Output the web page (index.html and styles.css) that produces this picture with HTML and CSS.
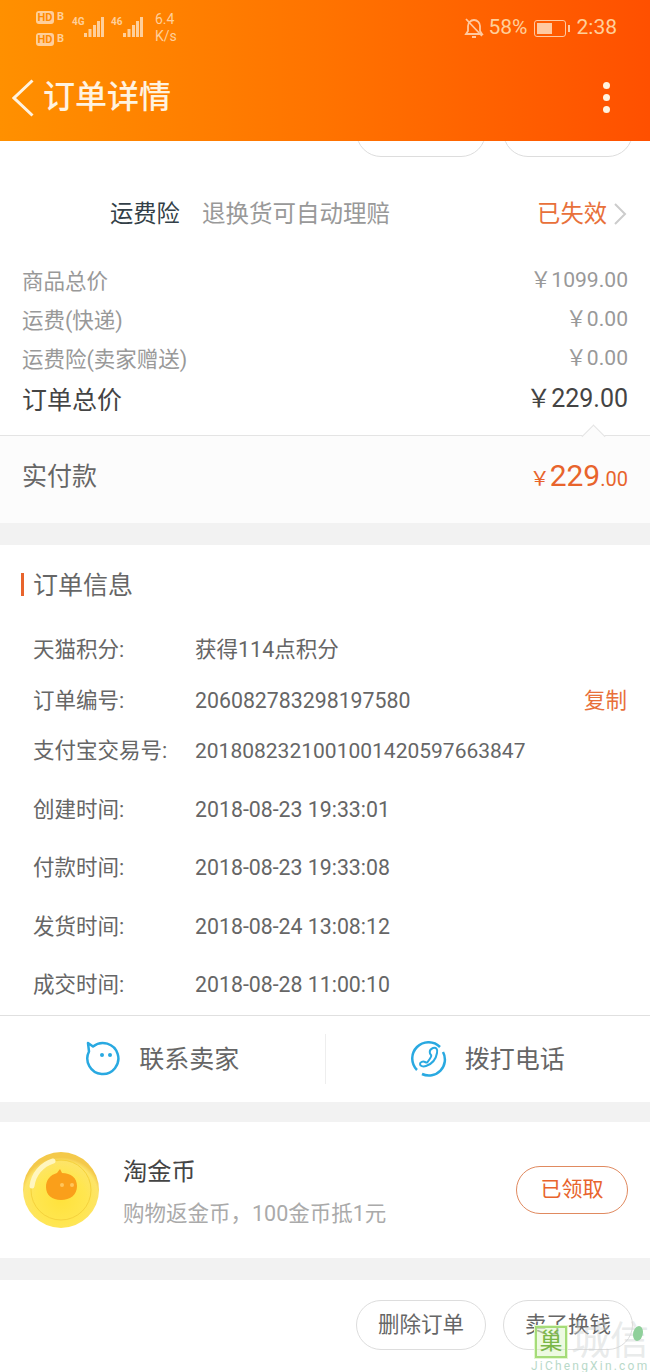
FILE: index.html
```html
<!DOCTYPE html>
<html lang="zh-CN">

<head>
    <meta charset="UTF-8">
    <meta name="viewport" content="width=device-width, initial-scale=1.0">
    <title>订单详情</title>
    <link rel="stylesheet" href="styles.css">
</head>

<body>
    <header class="top">
        <div class="status">
            <div class="status-left">
                <div class="sims">
                    <div class="sim"><span class="hd">HD</span><span class="sim-no">B</span></div>
                    <div class="sim"><span class="hd">HD</span><span class="sim-no">B</span></div>
                </div>
                <div class="net"><span class="net-type">4G</span>
                    <svg width="21" height="20" viewBox="0 0 21 20"><path d="M1 16h3v4H1zM5.500 12h3v8h-3zM10 8h3v12h-3zM14 4h3v16h-3zM18 0h3v20h-3z" fill="#ffcf9a"/></svg>
                </div>
                <div class="net"><span class="net-type">46</span>
                    <svg width="21" height="20" viewBox="0 0 21 20"><path d="M1 16h3v4H1zM5.500 12h3v8h-3zM10 8h3v12h-3zM14 4h3v16h-3zM18 0h3v20h-3z" fill="#ffcf9a"/></svg>
                </div>
                <div class="speed"><span>6.4</span><span>K/s</span></div>
            </div>
            <div class="status-right">
                <svg width="20" height="22" viewBox="0 0 20 22" fill="none" stroke="#ffc9a0" stroke-width="1.800">
                    <path d="M2 17h16l-2-3V9c0-3-2.500-6-6-6S4 6 4 9v5z"/>
                    <path d="M8 20h4M2 2l16 17"/>
                </svg>
                <span class="pct">58%</span>
                <div class="battery"><div class="battery-fill"></div></div>
                <span class="clock">2:38</span>
            </div>
        </div>
        <div class="title-bar">
            <svg class="back" width="22" height="38" viewBox="0 0 22 38" fill="none" stroke="#fff3e0" stroke-width="3">
                <path d="M20.500 1.500L2 19l18.500 17.500"/>
            </svg>
            <h1>订单详情</h1>
            <div class="more"><i></i><i></i><i></i></div>
        </div>
    </header>

    <div class="cut-btns">
        <div class="btn"></div>
        <div class="btn"></div>
    </div>

    <div class="insure">
        <span class="insure-name">运费险</span>
        <span class="insure-desc">退换货可自动理赔</span>
        <span class="insure-state">已失效</span>
        <svg width="14" height="22" viewBox="0 0 14 22" fill="none" stroke="#ccc" stroke-width="2">
            <path d="M2 1l10 10L2 21"/>
        </svg>
    </div>

    <div class="prices">
        <div class="price-row"><span class="label">商品总价</span><span class="num">￥1099.00</span></div>
        <div class="price-row"><span class="label">运费(快递)</span><span class="num">￥0.00</span></div>
        <div class="price-row"><span class="label">运费险(卖家赠送)</span><span class="num">￥0.00</span></div>
        <div class="price-row total"><span class="label">订单总价</span><span>￥229.00</span></div>
    </div>

    <div class="paid">
        <span class="label">实付款</span>
        <span class="paid-sum"><small class="yen">￥</small>229<small>.00</small></span>
    </div>

    <div class="gap"></div>

    <section class="info">
        <h2>订单信息</h2>
        <div class="info-row"><span class="key">天猫积分:</span><span>获得114点积分</span></div>
        <div class="info-row"><span class="key">订单编号:</span><span class="num">206082783298197580</span><span class="copy">复制</span></div>
        <div class="info-row"><span class="key">支付宝交易号:</span><span class="num long">2018082321001001420597663847</span></div>
        <div class="info-times">
            <div class="info-row"><span class="key">创建时间:</span><span class="num">2018-08-23 19:33:01</span></div>
            <div class="info-row"><span class="key">付款时间:</span><span class="num">2018-08-23 19:33:08</span></div>
            <div class="info-row"><span class="key">发货时间:</span><span class="num">2018-08-24 13:08:12</span></div>
            <div class="info-row"><span class="key">成交时间:</span><span class="num">2018-08-28 11:00:10</span></div>
        </div>
    </section>

    <div class="contact">
        <div class="contact-item">
            <svg width="36" height="36" viewBox="0 0 36 36" fill="none" stroke="#29a9e1" stroke-width="2.500">
                <path d="M3 2l5 3.500a15.500 15.500 0 1 1-4 5z" stroke-linejoin="round"/>
                <circle cx="17" cy="14" r="2" fill="#29a9e1" stroke="none"/>
                <circle cx="25" cy="14" r="2" fill="#29a9e1" stroke="none"/>
            </svg>
            <span class="contact-text">联系卖家</span>
        </div>
        <div class="contact-item">
            <svg width="36" height="36" viewBox="0 0 36 36" fill="none" stroke="#29a9e1" stroke-width="2.500">
                <path d="M6 29A16 16 0 0 1 29 6"/>
                <path d="M32 11A16 16 0 0 1 11 33"/>
                <path d="M22 7c3-1 5 1 4 5-1 6-5 11-11 13-3 1-6 0-6-2s3-3 5-2 2 1 4-2 3-4 2-5-3-5 2-7z" stroke-width="2"/>
            </svg>
            <span class="contact-text">拨打电话</span>
        </div>
    </div>

    <div class="gap gap-small"></div>

    <div class="coin-card">
        <svg class="coin" width="76" height="76" viewBox="0 0 76 76">
            <defs>
                <radialGradient id="coinFill" cx="50%" cy="62%" r="55%">
                    <stop offset="0" stop-color="#ffe23c"/>
                    <stop offset="0.6" stop-color="#ffe650"/>
                    <stop offset="0.9" stop-color="#fde468"/>
                    <stop offset="1" stop-color="#f4c94a"/>
                </radialGradient>
            </defs>
            <circle cx="38" cy="38" r="38" fill="url(#coinFill)"/>
            <circle cx="38" cy="38" r="30" fill="none" stroke="#f5d23c" stroke-width="1"/>
            <path d="M9 34A30 30 0 0 1 30 9" fill="none" stroke="#fff6bf" stroke-width="5" stroke-linecap="round"/>
            <path d="M37 17l2 4c9 0 15 5 15 13 0 9-7 14-16 14s-15-5-15-13c0-7 4-12 11-14z" fill="#fa9f1a"/>
            <circle cx="39" cy="33" r="2" fill="#ffc65c"/>
            <circle cx="49" cy="33" r="2" fill="#ffc65c"/>
        </svg>
        <div class="coin-text">
            <div class="coin-name">淘金币</div>
            <div class="coin-desc">购物返金币，100金币抵1元</div>
        </div>
        <div class="coin-btn">已领取</div>
    </div>

    <div class="gap"></div>

    <footer class="bottom">
        <div class="btn">删除订单</div>
        <div class="btn">卖了换钱</div>
    </footer>

    <div class="mark">
        <div class="mark-top">
            <span class="mark-logo">巢</span>
            <span class="mark-name">城信</span>
        </div>
        <div class="mark-url">JiChengXin.com</div>
    </div>
</body>

</html>
```

FILE: styles.css
```css
* {
    box-sizing: border-box;
}

body {
    margin: 0;
    height: 1372px;
    overflow: hidden;
    position: relative;
    background: #fff;
    color: #666;
    font-family: Roboto, "Noto Sans CJK SC", sans-serif;
    font-size: 21.500px;
    line-height: 1.300;
}

.num {
    font-size: 21.100px;
}

.gap {
    height: 22px;
    background: #f2f2f2;
}

.gap-small {
    height: 20.500px;
}

/* header */
.top {
    height: 141px;
    background: linear-gradient(90deg, #ff9000, #ff7300 50%, #ff5000);
    position: relative;
    z-index: 2;
}

.status {
    height: 51px;
    display: flex;
    justify-content: space-between;
    padding: 9px 33px 0 36px;
    color: #ffcf9a;
}

.status-left {
    display: flex;
}

.sims {
    width: 36px;
    display: flex;
    flex-direction: column;
    gap: 9px;
    padding-top: 2px;
}

.sim {
    display: flex;
    align-items: center;
    gap: 3px;
    height: 13px;
}

.hd {
    width: 18px;
    height: 13px;
    border-radius: 3px;
    background: #ffcf9a;
    color: #ff8a00;
    font-size: 11px;
    font-weight: 700;
    line-height: 13px;
    text-align: center;
}

.sim-no {
    font-size: 11px;
    font-weight: 700;
}

.net {
    width: 39px;
    display: flex;
    align-items: flex-start;
    padding-top: 8px;
}

.net-type {
    width: 11px;
    font-size: 10px;
    font-weight: 700;
    line-height: 10px;
}

.speed {
    display: flex;
    flex-direction: column;
    margin-left: 5px;
    padding-top: 2px;
    font-size: 14px;
    line-height: 17px;
}

.status-right {
    display: flex;
    align-items: center;
    height: 38px;
}

.pct {
    margin-left: 5px;
    font-size: 21px;
}

.battery {
    width: 32px;
    height: 17px;
    margin-left: 6px;
    margin-right: 11px;
    border: 1px solid #ffc9a0;
    border-radius: 3px;
    padding: 2px;
    position: relative;
}

.battery::after {
    content: "";
    position: absolute;
    right: -5px;
    top: 4px;
    width: 2px;
    height: 7px;
    background: #ffc9a0;
}

.battery-fill {
    width: 58%;
    height: 100%;
    background: #ffc9a0;
}

.clock {
    font-size: 21px;
}

.title-bar {
    height: 90px;
    display: flex;
    align-items: center;
    padding: 4px 40px 0 12px;
    color: #fff3e0;
}

.title-bar h1 {
    margin: 0 0 0 9px;
    font-size: 32px;
    font-weight: 500;
}

.more {
    margin-left: auto;
    margin-bottom: 2px;
    display: flex;
    flex-direction: column;
    gap: 5px;
}

.more i {
    width: 7px;
    height: 7px;
    border-radius: 50%;
    background: #fff3e0;
}

/* buttons */
.btn {
    width: 130px;
    height: 50px;
    border: 1.500px solid #ddd;
    border-radius: 25px;
    display: flex;
    align-items: center;
    justify-content: center;
    font-size: 21.500px;
}

.cut-btns {
    height: 16px;
    overflow: hidden;
    display: flex;
    justify-content: flex-end;
    align-items: flex-end;
    gap: 17px;
    padding-right: 17px;
}

/* freight insurance */
.insure {
    height: 104px;
    padding: 10px 23px 0 110px;
    display: flex;
    align-items: center;
    font-size: 23.300px;
}

.insure-name {
    color: #333f48;
}

.insure-desc {
    margin-left: 22px;
    color: #999;
    font-size: 23.500px;
}

.insure-state {
    margin-left: auto;
    margin-right: 6px;
    color: #e8703a;
}

/* price list */
.prices {
    height: 174px;
    padding: 0 22px;
    color: #999;
}

.price-row {
    height: 39px;
    display: flex;
    justify-content: space-between;
    align-items: center;
}

.price-row .label {
    padding-top: 2px;
}

.price-row .num {
    padding-bottom: 2px;
}

.price-row.total {
    height: 42px;
    color: #444;
    font-size: 25px;
}

.price-row.total .label {
    padding-top: 4px;
}

.paid {
    height: 88px;
    padding: 0 22px 6px;
    border-top: 1px solid #e4e4e4;
    background: #fcfcfc;
    display: flex;
    justify-content: space-between;
    align-items: center;
    font-size: 25px;
    position: relative;
}

.paid .label {
    padding-top: 2px;
}

.paid::before {
    content: "";
    position: absolute;
    top: -8px;
    left: 585px;
    width: 16px;
    height: 16px;
    background: #fcfcfc;
    border-top: 1px solid #e4e4e4;
    border-left: 1px solid #e4e4e4;
    transform: rotate(45deg);
}

.paid-sum {
    margin-bottom: 3px;
    color: #e8642c;
    font-size: 30px;
}

.paid-sum small {
    font-size: 20px;
}

/* order info */
.info h2 {
    height: 80px;
    margin: 0;
    padding: 2px 0 0 33px;
    display: flex;
    align-items: center;
    font-size: 25px;
    font-weight: 400;
    position: relative;
}

.info h2::before {
    content: "";
    position: absolute;
    left: 21px;
    top: 28px;
    width: 3px;
    height: 23px;
    background: #e8642c;
}

.info-row {
    height: 50.500px;
    padding: 0 23px 0 33px;
    display: flex;
    align-items: center;
}

.info-row .num {
    font-size: 21.300px;
}

.info-row .long {
    font-size: 21px;
}

.key {
    width: 162px;
    flex: none;
}

.copy {
    margin-left: auto;
    color: #e8703a;
}

.info-times {
    padding-top: 4px;
}

.info-times .info-row {
    height: 58.500px;
}

/* contact */
.contact {
    height: 87px;
    border-top: 1px solid #e0e0e0;
    display: flex;
    align-items: center;
    font-size: 25px;
}

.contact-item {
    flex: 1;
    height: 50px;
    display: flex;
    align-items: center;
    justify-content: center;
    gap: 18px;
}

.contact-text {
    padding-top: 4px;
}

.contact-item + .contact-item {
    border-left: 1px solid #eee;
}

/* gold coin card */
.coin-card {
    height: 136px;
    padding: 0 22px 0 23px;
    display: flex;
    align-items: center;
}

.coin {
    flex: none;
}

.coin-text {
    margin-left: 24px;
    padding-top: 4px;
}

.coin-name {
    color: #444;
    font-size: 24.300px;
    margin-bottom: 13px;
}

.coin-desc {
    color: #aaa;
}

.coin-btn {
    margin-left: auto;
    width: 112px;
    height: 48px;
    border: 1.500px solid #e08a60;
    border-radius: 25px;
    color: #e8642c;
    font-size: 21px;
    display: flex;
    align-items: center;
    justify-content: center;
}

/* bottom bar */
.bottom {
    padding: 20px 17px 0 0;
    display: flex;
    justify-content: flex-end;
    gap: 17px;
}

/* site mark over the corner */
.mark {
    position: absolute;
    left: 531px;
    top: 1325px;
    width: 119px;
}

.mark-top {
    display: flex;
    align-items: center;
    height: 33px;
    padding-left: 4px;
    position: relative;
}

.mark-top::after {
    content: "";
    position: absolute;
    left: 102px;
    top: 1px;
    width: 10px;
    height: 15px;
    border-radius: 60% 40% 60% 40%;
    background: #8fd09a;
}

.mark-logo {
    width: 32px;
    height: 32px;
    flex: none;
    background: rgba(222, 245, 200, 0.55);
    border: 2px solid #a5dc78;
    box-shadow: 0 0 0 1px #e3f6d0;
    color: #7ab648;
    font-size: 23px;
    line-height: 27px;
    text-align: center;
}

.mark-name {
    margin-left: 4px;
    color: rgba(205, 210, 210, 0.45);
    font-size: 39px;
    line-height: 33px;
    white-space: nowrap;
}

.mark-url {
    margin-top: 1px;
    color: #b9d9c9;
    font-size: 12px;
    letter-spacing: 2.200px;
    white-space: nowrap;
}
```
